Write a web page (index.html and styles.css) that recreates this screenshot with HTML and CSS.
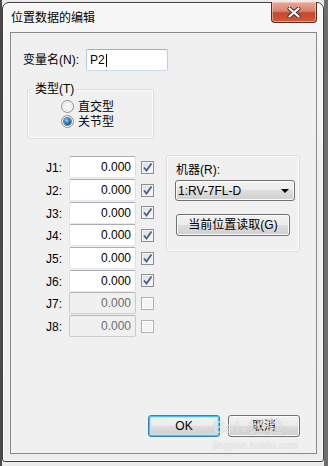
FILE: index.html
```html
<!DOCTYPE html>
<html>
<head>
<meta charset="utf-8">
<link rel="stylesheet" href="styles.css">
</head>
<body>
<div class="window">
  <div class="titlebar">
    <span class="title">位置数据的编辑</span>
    <div class="close">
      <svg width="14" height="11" viewBox="0 0 14 11">
        <path d="M2.5 1.5 L11.5 9.5 M11.5 1.5 L2.5 9.5" stroke="#3b2a2a" stroke-width="4" stroke-linecap="round"/>
        <path d="M2.5 1.5 L11.5 9.5 M11.5 1.5 L2.5 9.5" stroke="#ffffff" stroke-width="2.3" stroke-linecap="round"/>
      </svg>
    </div>
  </div>
  <div class="client">
    <div class="name-row">
      <span class="name-label">变量名(N):</span>
      <div class="textbox">P2<span class="caret"></span></div>
    </div>

    <div class="type-wrap">
      <div class="groupbox type-group">
        <span class="group-label">类型(T)</span>
        <div class="radio-row first"><span class="radio"></span><span class="radio-text">直交型</span></div>
        <div class="radio-row"><span class="radio checked"></span><span class="radio-text">关节型</span></div>
      </div>
    </div>

    <div class="main">
      <div class="joints">
        <span class="jlabel">J1:</span><div class="num">0.000</div><span class="check on"><svg width="11" height="11" viewBox="0 0 11 11"><path d="M2 5.5 L4.5 8.5 L9.5 1.5" fill="none" stroke="#4a5c8f" stroke-width="1.8"/></svg></span>
        <span class="jlabel">J2:</span><div class="num">0.000</div><span class="check on"><svg width="11" height="11" viewBox="0 0 11 11"><path d="M2 5.5 L4.5 8.5 L9.5 1.5" fill="none" stroke="#4a5c8f" stroke-width="1.8"/></svg></span>
        <span class="jlabel">J3:</span><div class="num">0.000</div><span class="check on"><svg width="11" height="11" viewBox="0 0 11 11"><path d="M2 5.5 L4.5 8.5 L9.5 1.5" fill="none" stroke="#4a5c8f" stroke-width="1.8"/></svg></span>
        <span class="jlabel">J4:</span><div class="num">0.000</div><span class="check on"><svg width="11" height="11" viewBox="0 0 11 11"><path d="M2 5.5 L4.5 8.5 L9.5 1.5" fill="none" stroke="#4a5c8f" stroke-width="1.8"/></svg></span>
        <span class="jlabel">J5:</span><div class="num">0.000</div><span class="check on"><svg width="11" height="11" viewBox="0 0 11 11"><path d="M2 5.5 L4.5 8.5 L9.5 1.5" fill="none" stroke="#4a5c8f" stroke-width="1.8"/></svg></span>
        <span class="jlabel">J6:</span><div class="num">0.000</div><span class="check on"><svg width="11" height="11" viewBox="0 0 11 11"><path d="M2 5.5 L4.5 8.5 L9.5 1.5" fill="none" stroke="#4a5c8f" stroke-width="1.8"/></svg></span>
        <span class="jlabel">J7:</span><div class="num disabled">0.000</div><span class="check disabled"></span>
        <span class="jlabel">J8:</span><div class="num disabled">0.000</div><span class="check disabled"></span>
      </div>

      <div class="groupbox robot-group">
        <div class="robot-label">机器(R):</div>
        <div class="combo"><span>1:RV-7FL-D</span><span class="arrow"></span></div>
        <div class="btn read">当前位置读取(G)</div>
      </div>
    </div>

    <div class="footer">
      <div class="btn ok">OK</div>
      <div class="btn">取消</div>
    </div>

    <div class="watermark">
      <div class="wm-main">Bai<span class="wm-paw">●</span>经验</div>
      <div class="wm-url">jingyan.baidu.com</div>
    </div>
  </div>
</div>
</body>
</html>
```

FILE: styles.css
```css
* { box-sizing: border-box; }

html, body {
  margin: 0;
  padding: 0;
  width: 328px;
  height: 466px;
  overflow: hidden;
}

body {
  background: linear-gradient(to right, #4a4a4a 0 2px, #ececec 2px 324px, #6e6e6e 324px);
  font-family: "Liberation Sans", "Noto Sans CJK SC", sans-serif;
  font-size: 12px;
  color: #000;
}

.window {
  margin: 2px 0 0 2px;
  width: 322px;
  height: 460px;
  border: 1px solid #3e3e3e;
  border-radius: 7px 7px 3px 3px;
  background: linear-gradient(#f7f7f7, #efefef 40%, #ededed);
  box-shadow: inset 0 0 0 1px #ffffff;
  display: flex;
  flex-direction: column;
  padding: 0 6px 7px 7px;
}

.titlebar {
  height: 29px;
  display: flex;
  align-items: flex-start;
  flex-shrink: 0;
}

.title {
  margin-top: 6px;
  margin-left: 1px;
  font-family: "Noto Sans CJK SC", sans-serif;
  font-size: 12px;
  line-height: 16px;
}

.close {
  margin-left: auto;
  margin-top: -1px;
  width: 46px;
  height: 21px;
  border: 1px solid #5c2b22;
  border-top: none;
  border-radius: 0 0 4px 4px;
  background: linear-gradient(#e9a99a 0%, #d9836f 45%, #c6472c 55%, #d35a3a 100%);
  box-shadow: inset 0 0 0 1px rgba(255, 210, 200, 0.55);
  display: flex;
  align-items: center;
  justify-content: center;
}

.client {
  flex: 1;
  position: relative;
  border: 1px solid #8a8a8a;
  background: #f0f0f0;
  display: flex;
  flex-direction: column;
}

/* name row */
.name-row {
  display: flex;
  align-items: center;
  margin-top: 16px;
  padding-left: 12px;
}

.name-label {
  width: 63px;
  font-size: 12px;
  line-height: 14px;
}

.textbox {
  width: 82px;
  height: 22px;
  background: #fff;
  border: 1px solid;
  border-color: #8fb2d6 #b5d0ea #c7dcef #b5d0ea;
  border-radius: 2px;
  padding-left: 3px;
  display: flex;
  align-items: center;
  font-size: 12px;
  line-height: 14px;
}

.caret {
  display: inline-block;
  width: 1px;
  height: 13px;
  background: #000;
  margin-left: 1px;
}

/* group boxes */
.groupbox {
  border: 1px solid #d5dfe5;
  border-radius: 3px;
  box-shadow: inset 0 0 0 1px #fbfcfd;
}

.group-label {
  display: block;
  width: max-content;
  margin: -8px 0 0 5px;
  padding: 0 2px;
  background: #f0f0f0;
  font-size: 12px;
  line-height: 14px;
}

.type-wrap {
  margin-top: 18px;
  padding-left: 16px;
  display: flex;
}

.type-group {
  width: 127px;
  padding-bottom: 9px;
}

.radio-row {
  display: flex;
  align-items: center;
  height: 15px;
  padding-left: 33px;
  font-size: 12px;
  line-height: 14px;
}

.radio-row.first {
  margin-top: 3px;
}

.radio {
  flex: 0 0 13px;
  height: 13px;
  border-radius: 50%;
  border: 1px solid #929292;
  background: radial-gradient(circle at 50% 50%, #f4f4f4 0 3px, #dcdcdc 5px, #e8e8e8 6px);
  box-shadow: inset 0 0 0 1px #f8f8f8;
  display: flex;
  align-items: center;
  justify-content: center;
}

.radio-text {
  margin-left: 4px;
}

.radio.checked::after {
  content: "";
  width: 7px;
  height: 7px;
  border-radius: 50%;
  background: radial-gradient(circle at 40% 35%, #9fdcff 0, #3b93d1 30%, #164e86 75%, #123f6e 100%);
  box-shadow: 0 0 0 1px #5f7f9f;
}

/* main section */
.main {
  display: flex;
  align-items: flex-start;
  margin-top: 16px;
  padding-left: 35px;
}

.joints {
  margin-top: 1px;
  display: grid;
  grid-template-columns: 18px 67px 13px;
  column-gap: 5px;
  grid-auto-rows: 22.7px;
  align-items: center;
}

.jlabel {
  font-size: 12px;
  line-height: 14px;
  padding-top: 2px;
}

.num {
  height: 22px;
  background: #fff;
  border: 1px solid;
  border-color: #abadb3 #dbdfe6 #e3e9ef #e2e3ea;
  border-radius: 2px;
  text-align: right;
  padding-right: 4px;
  line-height: 20px;
  font-size: 12px;
}

.num.disabled {
  background: #f0f0f0;
  border-color: #b5b5b5 #c8c8c8 #cfcfcf #c8c8c8;
  color: #6d6d6d;
}

.check {
  width: 13px;
  height: 13px;
  border: 1px solid #8e8f8f;
  background: linear-gradient(135deg, #dcdcdc, #fbfbfb);
  box-shadow: inset 0 0 0 1px #f4f4f4;
  display: flex;
  align-items: center;
  justify-content: center;
}

.check.disabled {
  border-color: #b0b0b0;
  background: #f4f4f4;
  box-shadow: inset 0 0 0 1px #fff;
}

.robot-group {
  margin-left: 12px;
  width: 134px;
  height: 97px;
  padding: 7px 0 0 8px;
}

.robot-label {
  margin-left: 1px;
  font-size: 12px;
  line-height: 14px;
}

.combo {
  margin-top: 3px;
  width: 120px;
  height: 21px;
  border: 1px solid #707070;
  border-radius: 3px;
  background: linear-gradient(#f2f2f2 0%, #ebebeb 50%, #dddddd 50%, #cfcfcf 100%);
  box-shadow: inset 0 0 0 1px #fcfcfc;
  display: flex;
  align-items: center;
  justify-content: space-between;
  padding: 0 5px 0 2px;
  font-size: 12px;
  line-height: 14px;
}

.arrow {
  width: 0;
  height: 0;
  border-left: 4px solid transparent;
  border-right: 4px solid transparent;
  border-top: 4px solid #000;
}

.btn {
  height: 22px;
  border: 1px solid #707070;
  border-radius: 3px;
  background: linear-gradient(#f2f2f2 0%, #ebebeb 50%, #dddddd 50%, #cfcfcf 100%);
  box-shadow: inset 0 0 0 1px #fcfcfc;
  display: flex;
  align-items: center;
  justify-content: center;
  font-size: 12px;
  line-height: 14px;
}

.btn.read {
  margin-top: 13px;
  margin-left: 1px;
  width: 114px;
}

.footer {
  margin-top: auto;
  display: flex;
  justify-content: flex-end;
  gap: 8px;
  padding: 0 16px 16px 0;
}

.footer .btn {
  width: 72px;
}

.btn.ok {
  border-color: #3c7fb1;
  box-shadow: inset 0 0 0 1px #49c1f0, inset 0 0 0 2px #bfe6f8;
}

/* watermark */
.watermark {
  position: absolute;
  left: 202px;
  top: 385px;
  width: 96px;
  color: rgba(255, 255, 255, 0.55);
  text-shadow: 0 0 1px rgba(120, 120, 120, 0.35);
  pointer-events: none;
}

.wm-main {
  font-family: "Liberation Sans", "Noto Sans CJK SC", sans-serif;
  font-weight: bold;
  font-size: 17px;
  line-height: 20px;
  white-space: nowrap;
}

.wm-paw {
  font-size: 12px;
  margin: 0 1px;
}

.wm-url {
  font-size: 10px;
  line-height: 12px;
  margin-top: 1px;
  letter-spacing: 0.3px;
}
```
